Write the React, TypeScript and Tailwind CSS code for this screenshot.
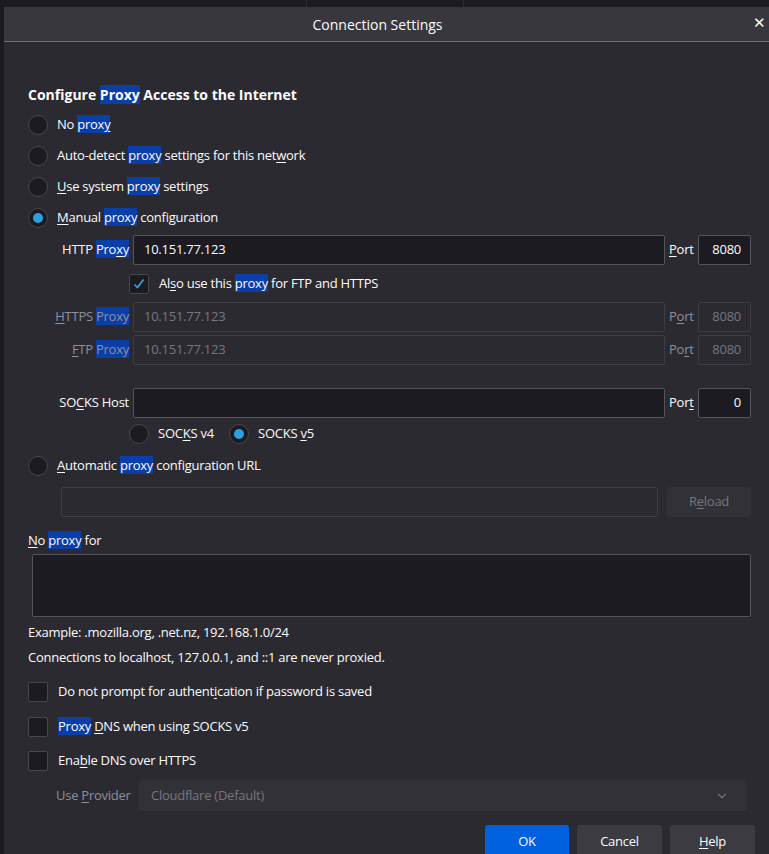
import { ChevronDown } from "lucide-react";
import type { ReactNode } from "react";

const font = { fontFamily: '"Segoe UI", "Open Sans", "Noto Sans", sans-serif' };

// access-key underline
const U = ({ children }: { children: ReactNode }) => <span className="underline underline-offset-2">{children}</span>;
// search highlight on the word "proxy"
const Hl = ({ children }: { children: ReactNode }) => <span className="bg-[#0a3ea8]">{children}</span>;

const Radio = ({ checked }: { checked?: boolean }) => (
  <span className="flex h-[20px] w-[20px] shrink-0 items-center justify-center rounded-full border border-[#48474f] bg-[#1c1b22]">
    {checked && <span className="h-[10px] w-[10px] rounded-full bg-[#2d9fe3]" />}
  </span>
);

const Check = ({ checked }: { checked?: boolean }) => (
  <span className="flex h-[20px] w-[20px] shrink-0 items-center justify-center rounded-[2px] border border-[#48474f] bg-[#1c1b22]">
    {checked && (
      <svg width="14" height="14" viewBox="0 0 14 14" fill="none">
        <path d="M2.5 7.5 L5.5 10.5 L11.5 2.5" stroke="#3ba5e8" strokeWidth="1.6" />
      </svg>
    )}
  </span>
);

const RadioRow = ({ checked, children }: { checked?: boolean; children: ReactNode }) => (
  <div className="flex h-[31px] items-center gap-[9px]">
    <Radio checked={checked} />
    <span>{children}</span>
  </div>
);

interface ProxyRowProps {
  label: ReactNode;
  value: string;
  port: string;
  portLabel: ReactNode;
  disabled?: boolean;
  className?: string;
}

const ProxyRow = ({ label, value, port, portLabel, disabled, className }: ProxyRowProps) => (
  <div className={`flex h-[30px] items-stretch ${className ?? ""}`}>
    <div className={`flex w-[105px] items-center justify-end pr-[4px] ${disabled ? "text-[#8f8f9d]" : ""}`}>
      <span>{label}</span>
    </div>
    <div
      className={`flex flex-1 items-center rounded-[2px] border px-[10px] ${
        disabled ? "border-[#3d3c43] bg-[#2b2a31] text-[#77767d]" : "border-[#55545b] bg-[#1c1b22]"
      }`}
    >
      {value}
    </div>
    <div className={`flex w-[33px] items-center pl-[4px] ${disabled ? "text-[#8f8f9d]" : ""}`}>
      <span>{portLabel}</span>
    </div>
    <div
      className={`flex w-[53px] items-center justify-end rounded-[2px] border px-[9px] ${
        disabled ? "border-[#3d3c43] bg-[#2b2a31] text-[#77767d]" : "border-[#55545b] bg-[#1c1b22]"
      }`}
    >
      {port}
    </div>
  </div>
);

export default function App() {
  return (
    <div className="h-[854px] w-[769px] overflow-hidden bg-[#1c1b21] text-[13px] tracking-[-0.25px] text-[#fbfbfe]" style={font}>
      <div className="flex h-[7px]">
        <div className="w-[306px]" />
        <div className="w-px bg-[#2e2d33]" />
        <div className="w-[156px]" />
        <div className="w-px bg-[#2e2d33]" />
      </div>
      <div className="ml-[4px] h-[847px] bg-[#2b2a30]">
        <div className="relative flex h-[35px] items-center justify-center border-b border-[#6f6e74] bg-[#38373d] pr-[18px] tracking-normal">
          <span className="text-[14px]">Connection Settings</span>
          <span className="absolute right-[3px] top-[8px] text-[15px] leading-none">✕</span>
        </div>

        <div className="pl-[24px] pr-[18px] pt-[43px]">
          <div className="h-[20px] text-[14px] font-bold leading-[20px] tracking-normal">
            Configure <Hl>Proxy</Hl> Access to the Internet
          </div>
          <div className="mt-[4px]">
            <RadioRow>
              No <Hl>prox<U>y</U></Hl>
            </RadioRow>
            <RadioRow>
              Auto-detect <Hl>proxy</Hl> settings for this net<U>w</U>ork
            </RadioRow>
            <RadioRow>
              <U>U</U>se system <Hl>proxy</Hl> settings
            </RadioRow>
            <RadioRow checked>
              <U>M</U>anual <Hl>proxy</Hl> configuration
            </RadioRow>
          </div>

          <ProxyRow
            className="mt-[2px]"
            label={<>HTTP <Hl>Pro<U>x</U>y</Hl></>}
            value="10.151.77.123"
            portLabel={<><U>P</U>ort</>}
            port="8080"
          />
          <div className="mt-[1px] flex h-[36px] items-center gap-[10px] pl-[101px]">
            <Check checked />
            <span>
              Al<U>s</U>o use this <Hl>proxy</Hl> for FTP and HTTPS
            </span>
          </div>
          <ProxyRow
            disabled
            label={<><U>H</U>TTPS <Hl>Proxy</Hl></>}
            value="10.151.77.123"
            portLabel={<>P<U>o</U>rt</>}
            port="8080"
          />
          <ProxyRow
            className="mt-[3px]"
            disabled
            label={<><U>F</U>TP <Hl>Proxy</Hl></>}
            value="10.151.77.123"
            portLabel={<>Po<U>r</U>t</>}
            port="8080"
          />
          <ProxyRow
            className="mt-[23px]"
            label={<>SO<U>C</U>KS Host</>}
            value=""
            portLabel={<>Por<U>t</U></>}
            port="0"
          />
          <div className="flex h-[32px] items-center pl-[101px]">
            <Radio />
            <span className="ml-[9px] w-[71px]">
              SOC<U>K</U>S v4
            </span>
            <Radio checked />
            <span className="ml-[9px]">
              SOCKS <U>v</U>5
            </span>
          </div>
          <RadioRow>
            <U>A</U>utomatic <Hl>proxy</Hl> configuration URL
          </RadioRow>
          <div className="mt-[6px] flex h-[30px] gap-[9px] pl-[33px]">
            <div className="flex-1 rounded-[2px] border border-[#3d3c43] bg-[#2b2a31]" />
            <div className="flex w-[84px] items-center justify-center rounded-[3px] bg-[#323137] text-[#77767d]">
              <span>
                R<U>e</U>load
              </span>
            </div>
          </div>

          <div className="mt-[11px] flex h-[26px] items-center">
            <span>
              <U>N</U>o <Hl>proxy</Hl> for
            </span>
          </div>
          <div className="ml-[4px] h-[63px] rounded-[2px] border border-[#55545b] bg-[#1c1b22]" />
          <div className="mt-[6px] flex h-[20px] items-center">Example: .mozilla.org, .net.nz, 192.168.1.0/24</div>
          <div className="mt-[5px] flex h-[20px] items-center">
            Connections to localhost, 127.0.0.1, and ::1 are never proxied.
          </div>

          <div className="mt-[7px] flex h-[34px] items-center gap-[10px]">
            <Check />
            <span>
              Do not prompt for authent<U>i</U>cation if password is saved
            </span>
          </div>
          <div className="mt-[1px] flex h-[34px] items-center gap-[10px]">
            <Check />
            <span>
              <Hl>Proxy</Hl> <U>D</U>NS when using SOCKS v5
            </span>
          </div>
          <div className="flex h-[34px] items-center gap-[10px]">
            <Check />
            <span>
              Ena<U>b</U>le DNS over HTTPS
            </span>
          </div>

          <div className="mt-[2px] flex h-[31px] items-stretch pl-[28px] pr-[4px] text-[#8f8f9d]">
            <div className="flex w-[83px] items-center">
              <span>
                Use <U>P</U>rovider
              </span>
            </div>
            <div className="flex flex-1 items-center justify-between rounded-[3px] bg-[#323137] pl-[12px] pr-[18px] text-[#77767d]">
              <span>Cloudflare (Default)</span>
              <ChevronDown size={14} strokeWidth={2} className="text-[#77767d]" />
            </div>
          </div>

          <div className="mt-[14px] flex justify-end gap-[8px]">
            <div className="flex h-[34px] w-[84px] items-center justify-center rounded-[3px] bg-[#0061e0]">OK</div>
            <div className="flex h-[34px] w-[85px] items-center justify-center rounded-[3px] bg-[#3c3b41]">Cancel</div>
            <div className="-mr-[4px] flex h-[34px] w-[85px] items-center justify-center rounded-[3px] bg-[#3c3b41]">
              <span>
                <U>H</U>elp
              </span>
            </div>
          </div>
        </div>
      </div>
    </div>
  );
}
